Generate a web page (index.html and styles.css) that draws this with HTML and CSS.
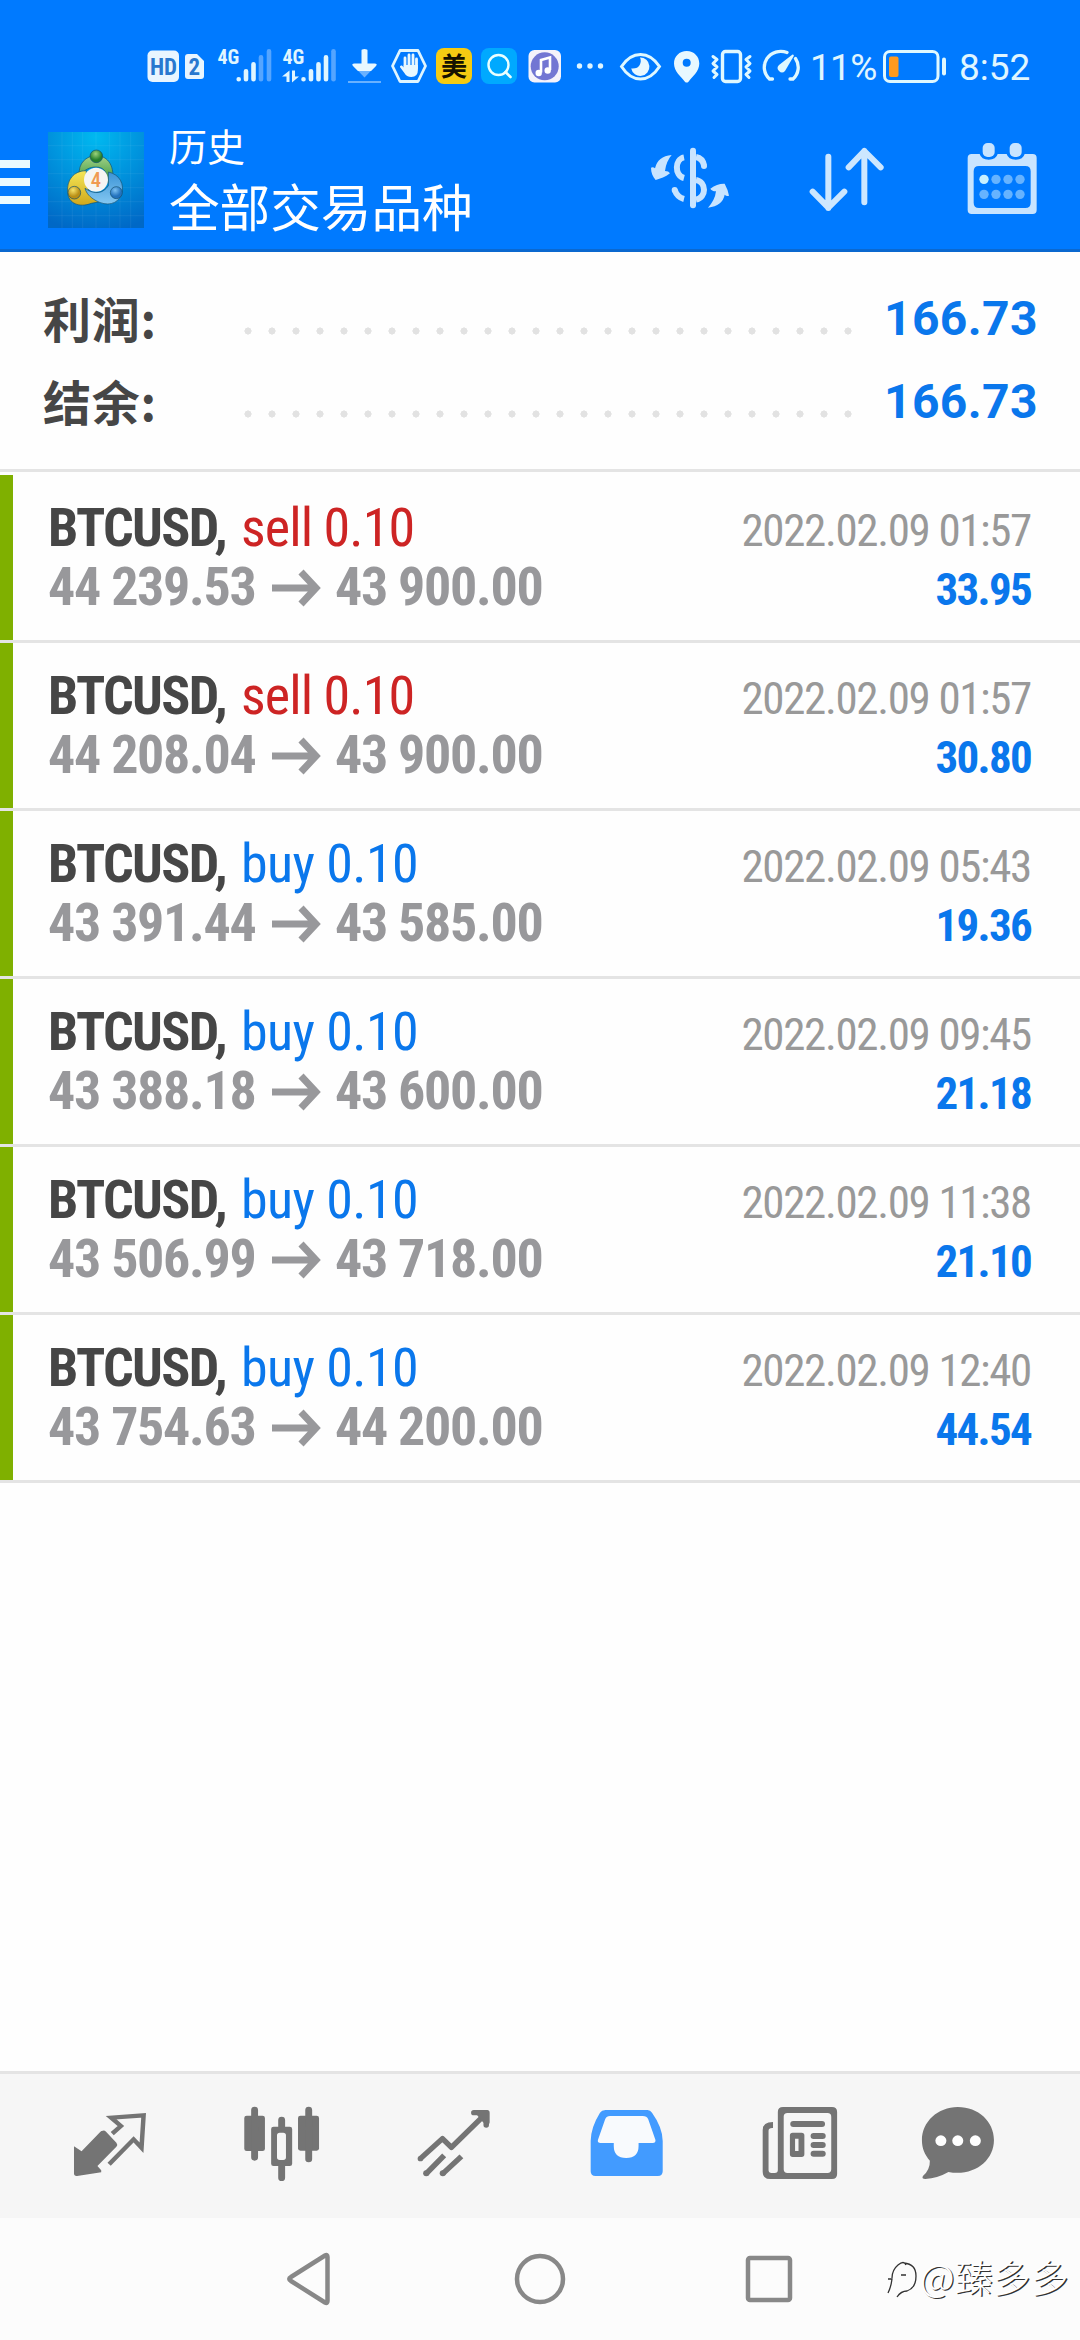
FILE: index.html
```html
<!DOCTYPE html>
<html lang="zh-CN">
<head>
<meta charset="utf-8">
<title>历史</title>
<link rel="stylesheet" href="styles.css">
</head>
<body>
<div class="screen">
  <header class="top">
    <div class="status">
      <svg class="st-hd" width="57" height="50" viewBox="147 41 57 50">
        <rect x="147.500" y="50.500" width="31.500" height="31.500" rx="5" fill="#e8f5ff"/>
        <text x="163.500" y="74.500" class="t-hd" text-anchor="middle">HD</text>
        <path d="M188 54h9l7 7v15q0 3-3 3h-13q-3 0-3-3v-19q0-3 3-3z" fill="#e8f5ff"/>
        <text x="194.300" y="74.500" class="t-sim" text-anchor="middle">2</text>
      </svg>
      <svg class="st-sig" width="54" height="50" viewBox="217 41 54 50">
        <text x="217.500" y="63.500" class="t-net">4G</text>
        <g stroke="#e0f6ff" stroke-width="4.600" stroke-linecap="round">
          <path d="M238.700 79.300v0M246 79.300v-8M253.500 79.300v-15"/>
          <path d="M261 79.300v-22M269 79.300v-28" stroke="#55a5ff"/>
        </g>
      </svg>
      <svg class="st-sig" width="54" height="50" viewBox="282 41 54 50">
        <text x="282.500" y="63.500" class="t-net">4G</text>
        <g stroke="#e0f6ff" stroke-width="4.600" stroke-linecap="round">
          <path d="M303.500 79.300v0M311 79.300v-8M318.500 79.300v-15M326 79.300v-22"/>
          <path d="M333.500 79.300v-28" stroke="#55a5ff"/>
        </g>
        <path d="M289.500 70.500v11.500h-3v-5.500h-4.500zM292 70.500h3v6h4l-7 6z" fill="#e0f6ff"/>
      </svg>
      <svg class="st-down" width="34" height="50" viewBox="348 41 34 50">
        <path d="M353 65.500h23l-11.500 12z" fill="#68b1ff"/>
        <path d="M361.500 50.500q0-1.500 3-1.500t3 1.500v13h7q3.500 0 1.500 2.500l-5 5h-13l-5-5q-2-2.500 1.500-2.500h7z" fill="#e8f8ff"/>
        <path d="M348 82h33" stroke="#68b1ff" stroke-width="2"/>
      </svg>
      <svg class="st-hand" width="36" height="50" viewBox="391 41 36 50">
        <path d="M400 50.500h18l7.500 15.500-7.500 15.500h-18l-7.500-15.500z" fill="none" stroke="#dff5ff" stroke-width="2.800" stroke-linejoin="round"/>
        <path d="M405 68v-10M409 67v-12M413 67v-12M416.500 68v-9" stroke="#e8f8ff" stroke-width="2.800" stroke-linecap="round"/>
        <path d="M403.700 65h14.200v5q0 7-6.500 7-5 0-7-4l-4.500-6q0-2 2-1.500l2 2z" fill="#e8f8ff"/>
      </svg>
      <span class="badge-mei">美</span>
      <svg class="st-search" width="36" height="50" viewBox="481 41 36 50">
        <rect x="481" y="48" width="36" height="36" rx="8" fill="#00a9ff"/>
        <circle cx="498.500" cy="65" r="10" fill="none" stroke="#eaffff" stroke-width="2.400"/>
        <path d="M505.500 72l5 5" stroke="#eaffff" stroke-width="2.600" stroke-linecap="round"/>
      </svg>
      <svg class="st-music" width="33" height="50" viewBox="528 41 33 50">
        <rect x="528.500" y="50" width="32.500" height="32.500" rx="6" fill="#f4f2fb"/>
        <circle cx="544.700" cy="66.300" r="14" fill="#7276d3"/>
        <path d="M541 72.500v-12.500l9-2.500v12.500" fill="none" stroke="#fff" stroke-width="2.600"/>
        <circle cx="538.700" cy="73" r="3.200" fill="#fff"/><circle cx="547.700" cy="70.500" r="3.200" fill="#fff"/>
      </svg>
      <svg class="st-more" width="26" height="50" viewBox="577 41 26 50">
        <g fill="#dff5ff"><circle cx="579.500" cy="66" r="2.700"/><circle cx="590" cy="66" r="2.700"/><circle cx="600.500" cy="66" r="2.700"/></g>
      </svg>
      <svg class="st-eye" width="41" height="50" viewBox="620 41 41 50">
        <path d="M621.500 66.500q8-12 19-12t19 12q-8 12.500-19 12.500t-19-12.500z" fill="none" stroke="#dff8ff" stroke-width="3"/>
        <path d="M640 57.500a9.200 9.200 0 1 1-8.800 11q6.500.5 8.500-3.500t.3-7.500z" fill="#e8f8ff"/>
      </svg>
      <svg class="st-pin" width="26" height="50" viewBox="674 41 26 50">
        <path fill-rule="evenodd" d="M686.700 51c7.300 0 12.600 5.500 12.600 12.500 0 8-7 13-10.800 18.200q-1.800 1.800-3.600 0c-3.800-5.200-10.900-10.200-10.900-18.200 0-7 5.400-12.500 12.700-12.500zm0 7.700a4 4 0 1 0 0 8 4 4 0 1 0 0-8z" fill="#e8f8ff"/>
      </svg>
      <svg class="st-vib" width="41" height="50" viewBox="711 41 41 50">
        <g fill="none" stroke="#dff8ff" stroke-linejoin="round" stroke-linecap="round"><rect x="722.500" y="51.500" width="18" height="30" rx="3" stroke-width="3.400"/>
        <path d="M713 56.500l4 3-4 4 4 3.500-4 4 4 3.500-3 3M750 56.500l-4 3 4 4-4 3.500 4 4-4 3.500 3 3" stroke-width="3"/></g>
      </svg>
      <svg class="st-gauge" width="36" height="50" viewBox="763 41 36 50">
        <g fill="none" stroke="#dff8ff" stroke-width="3.300" stroke-linecap="round"><path d="M787 52.500a16.500 16 0 0 0-17.500 26.500h3M795.500 58.500a16.500 16 0 0 1-2.500 20.500h-3"/></g>
        <path d="M792.500 54.500q2 0 1 2l-8.500 14.500q-3 3-6 0t0-6z" fill="#dff8ff"/>
      </svg>
      <span class="st-pct">11%</span>
      <svg class="st-bat" width="64" height="50" viewBox="883 41 64 50">
        <rect x="884.500" y="51.500" width="53.500" height="30" rx="5.500" fill="none" stroke="#dff8ff" stroke-width="3"/>
        <rect x="889" y="56.500" width="9.500" height="20.500" rx="2" fill="#ff9a1f"/>
        <path d="M944 59.500v14" stroke="#dff8ff" stroke-width="4" stroke-linecap="round"/>
      </svg>
      <span class="st-time">8:52</span>
    </div>
    <div class="toolbar">
      <div class="burger"><i></i><i></i><i></i></div>
      <svg class="logo" width="96" height="96" viewBox="24 21 288 288">
        <defs>
          <radialGradient id="bg" cx=".5" cy=".05" r="1"><stop offset="0" stop-color="#00b9f0"/><stop offset=".5" stop-color="#0091dc"/><stop offset="1" stop-color="#0068c6"/></radialGradient>
          <linearGradient id="gr" x2="0" y2="1"><stop offset="0" stop-color="#a3d389"/><stop offset="1" stop-color="#2f8f35"/></linearGradient>
          <linearGradient id="ye" x2="0" y2="1"><stop offset="0" stop-color="#f5e657"/><stop offset="1" stop-color="#cfa81c"/></linearGradient>
          <linearGradient id="bl" x2="0" y2="1"><stop offset="0" stop-color="#3b93d6"/><stop offset="1" stop-color="#84c8f2"/></linearGradient>
          <radialGradient id="g2" cx=".45" cy=".3"><stop offset="0" stop-color="#9bd27c"/><stop offset="1" stop-color="#247f2c"/></radialGradient>
          <radialGradient id="y2" cx=".4" cy=".3"><stop offset="0" stop-color="#f7e46a"/><stop offset="1" stop-color="#b98f16"/></radialGradient>
          <radialGradient id="b2" cx=".4" cy=".3"><stop offset="0" stop-color="#7cc1f2"/><stop offset="1" stop-color="#2372bd"/></radialGradient>
        </defs>
        <path fill="url(#bg)" d="M24 21h288v288H24z"/>
        <path d="M24 62h288M24 104h288M24 146h288M24 188h288M24 230h288M24 272h288M66 21v288M97 21v288M128 21v288M168 21v288M208 21v288M240 21v288M272 21v288" stroke="#fff" stroke-opacity=".09" stroke-width="2"/>
        <g stroke="#14506f" stroke-width="2">
          <path d="M118 150c-4-34 20-58 50-58 37 0 58 32 49 86l-15-5c2-30-10-47-34-47-20 0-32 8-50 24z" fill="url(#gr)"/>
          <path d="M139 137c-38 0-60 28-56 66 2 32 35 46 71 32l32-6c-30-8-50-28-47-92z" fill="url(#ye)"/>
          <path d="M205 141c34 7 50 37 39 68-11 29-44 36-76 18-18-10-29-22-33-37 29 20 54 16 70-8z" fill="url(#bl)"/>
          <circle cx="169" cy="94" r="19" fill="url(#g2)"/><circle cx="103" cy="203" r="19" fill="url(#y2)"/><circle cx="229" cy="203" r="18" fill="url(#b2)"/>
        </g>
        <circle cx="168" cy="164" r="36" fill="#f6f5f3"/>
        <text x="168" y="187" text-anchor="middle" class="logo-num">4</text>
      </svg>
      <div class="titles"><span class="title-sm">历史</span><span class="title-lg">全部交易品种</span></div>
      <div class="actions">
        <svg width="80" height="80" viewBox="90 60 240 240" fill="none" stroke="#c8e4ff">
          <path d="M219 92v164" stroke-width="18" stroke-linecap="round"/>
          <path d="M192 112c-27 5-30 54 0 62M192 237q-20-5-28-27" stroke-width="18"/>
          <circle cx="164" cy="210" r="9" fill="#c8e4ff" stroke="none"/>
          <path d="M228 111q20 4 24 25M228 180c32 6 32 53 0 59" stroke-width="18"/>
          <circle cx="252" cy="138" r="9" fill="#c8e4ff" stroke="none"/>
          <path d="M155 105q-42 4-50 40-6-6-12-2c0 16 6 27 14 37 15-5 29-8 43-20q-4-7-15-7 3-28 20-48zM264 263q44-6 50-39 6 6 13 3-3-18-13-36-22-1-43 15 3 7 17 8-3 26-24 49z" fill="#c8e4ff" stroke="none"/>
        </svg>
        <svg width="80" height="80" viewBox="560 60 240 240" fill="none" stroke="#cde7ff" stroke-width="18" stroke-linecap="round" stroke-linejoin="round">
          <path d="M624 110v154M577 215l47 48 48-48M732 247V93M685 142l47-49 49 49"/>
        </svg>
        <svg width="80" height="80" viewBox="1030 60 240 240">
          <path fill="#c8e4ff" fill-rule="evenodd" d="M1056 102h24q5 17 27 17t27-17h27q5 17 27 17t27-17h24q12 0 12 12v156q0 12-12 12h-183q-12 0-12-12v-156q0-12 12-12zm22 36q-16 0-16 16v94q0 16 16 16h139q16 0 16-16v-94q0-16-16-16z"/>
          <rect x="1089" y="69" width="36" height="42" rx="15" fill="#c8e4ff"/><rect x="1170" y="69" width="36" height="42" rx="15" fill="#c8e4ff"/>
          <g fill="#66b3ff"><circle cx="1093" cy="178" r="14" fill="#c8f0ff"/><circle cx="1129" cy="178" r="14"/><circle cx="1165" cy="178" r="14"/><circle cx="1201" cy="178" r="14"/><circle cx="1093" cy="223" r="14"/><circle cx="1129" cy="223" r="14"/><circle cx="1165" cy="223" r="14"/><circle cx="1201" cy="223" r="14"/></g>
        </svg>
      </div>
    </div>
  </header>

  <section class="summary">
    <div class="sum-row"><span class="sum-label">利润:</span><span class="leader"></span><span class="sum-value">166.73</span></div>
    <div class="sum-row"><span class="sum-label">结余:</span><span class="leader"></span><span class="sum-value">166.73</span></div>
  </section>

  <main class="deals">
    <article class="deal"><div class="line"><span class="symbol">BTCUSD,</span><span class="side sell">sell 0.10</span><time>2022.02.09 01:57</time></div><div class="line"><span class="price">44 239.53</span><svg class="arrow" viewBox="0 0 48 36"><path d="M0 18h43M29 2l15 16-15 16"/></svg><span class="price">43 900.00</span><span class="profit">33.95</span></div></article>
    <article class="deal"><div class="line"><span class="symbol">BTCUSD,</span><span class="side sell">sell 0.10</span><time>2022.02.09 01:57</time></div><div class="line"><span class="price">44 208.04</span><svg class="arrow" viewBox="0 0 48 36"><path d="M0 18h43M29 2l15 16-15 16"/></svg><span class="price">43 900.00</span><span class="profit">30.80</span></div></article>
    <article class="deal"><div class="line"><span class="symbol">BTCUSD,</span><span class="side buy">buy 0.10</span><time>2022.02.09 05:43</time></div><div class="line"><span class="price">43 391.44</span><svg class="arrow" viewBox="0 0 48 36"><path d="M0 18h43M29 2l15 16-15 16"/></svg><span class="price">43 585.00</span><span class="profit">19.36</span></div></article>
    <article class="deal"><div class="line"><span class="symbol">BTCUSD,</span><span class="side buy">buy 0.10</span><time>2022.02.09 09:45</time></div><div class="line"><span class="price">43 388.18</span><svg class="arrow" viewBox="0 0 48 36"><path d="M0 18h43M29 2l15 16-15 16"/></svg><span class="price">43 600.00</span><span class="profit">21.18</span></div></article>
    <article class="deal"><div class="line"><span class="symbol">BTCUSD,</span><span class="side buy">buy 0.10</span><time>2022.02.09 11:38</time></div><div class="line"><span class="price">43 506.99</span><svg class="arrow" viewBox="0 0 48 36"><path d="M0 18h43M29 2l15 16-15 16"/></svg><span class="price">43 718.00</span><span class="profit">21.10</span></div></article>
    <article class="deal"><div class="line"><span class="symbol">BTCUSD,</span><span class="side buy">buy 0.10</span><time>2022.02.09 12:40</time></div><div class="line"><span class="price">43 754.63</span><svg class="arrow" viewBox="0 0 48 36"><path d="M0 18h43M29 2l15 16-15 16"/></svg><span class="price">44 200.00</span><span class="profit">44.54</span></div></article>
  </main>

  <nav class="tabs">
    <svg viewBox="186 42 267 432" preserveAspectRatio="none" fill="none" stroke="#747474" stroke-width="13">
      <path d="M299 212q-5 0-8 4l-54 58-22-15v81q0 9 9 8l70-11v-6l-11-13 55-58q5-6 0-12l-30-33q-4-4-9-3z" fill="#747474" stroke="none"/>
      <path d="M326 221l25-23-28-25 94-7-6 97-23-25-71 75"/>
    </svg>
    <svg viewBox="685 42 267 432" preserveAspectRatio="none" fill="#747474">
      <rect x="709" y="167" width="60" height="106" rx="7"/><rect x="865" y="167" width="61" height="105" rx="7"/>
      <path fill-rule="evenodd" d="M794 200h47q7 0 7 7v104q0 7-7 7h-47q-7 0-7-7V207q0-7 7-7zm18 18q-8 0-8 8v66q0 8 8 8h10q8 0 8-8v-66q0-8-8-8z"/>
      <path d="M739 150v142M896 150v147M817.500 180v22M817.500 315v38" stroke="#747474" stroke-width="20" stroke-linecap="round"/>
    </svg>
    <svg viewBox="1185 42 267 432" preserveAspectRatio="none" fill="none" stroke="#747474" stroke-width="16" stroke-linejoin="round">
      <path d="M1221 296l64-60 26 26 97-98M1238 341l52-55M1286 341l54-52"/><path d="M1376 158h36v37" stroke-width="16" stroke-linecap="round"/>
      <path d="M1390 158h24v28l-12-12z" fill="#747474"/>
      <g fill="#747474" stroke="none"><circle cx="1221" cy="296" r="8"/><circle cx="1238" cy="340" r="9"/><circle cx="1286" cy="340" r="9"/></g>
    </svg>
    <svg viewBox="116 42 267 432" preserveAspectRatio="none">
      <path d="M190 150h122q8 0 13 8 31 45 31 85v91q0 14-14 14H161q-14 0-14-14v-91q0-40 27-85 5-8 16-8z" fill="#429bff"/>
      <path d="M203 168h95q12 0 16 10l21 62q1 9-8 9h-41v9q0 36-36 36t-36-36v-9h-38q-10 0-8-9l21-62q4-10 14-10z" fill="#f8fafd"/>
    </svg>
    <svg viewBox="616 42 267 432" preserveAspectRatio="none" fill="#747474">
      <path fill-rule="evenodd" d="M706 141h142q15 0 15 15v186q0 15-15 15H669q-22 0-22-22V210q0-24 30-24v18q-13-1-13 8v118q0 9 9 9h9q9 0 9-9V156q0-15 15-15zm13 18q-11 0-11 11v158q0 11 11 11h116q11 0 11-11V170q0-11-11-11z"/>
      <path d="M736 192h83M795 228h26M795 255h26M795 281h26" stroke="#747474" stroke-width="18" stroke-linecap="round"/>
      <path fill-rule="evenodd" d="M734 218h26q8 0 8 8v57q0 8-8 8h-26q-8 0-8-8v-57q0-8 8-8zm7 18v37h10v-37z"/>
    </svg>
    <svg viewBox="1115 42 267 432" preserveAspectRatio="none">
      <path d="M1213 141c60 0 105 44 105 99 0 64-60 110-132 96q-32 19-67 21-12 0-7-9 21-20 20-46c-15-18-23-36-23-62 0-54 46-99 104-99z" fill="#747474"/>
      <g fill="#fff"><circle cx="1164" cy="242" r="16"/><circle cx="1213" cy="242" r="16"/><circle cx="1264" cy="242" r="16"/></g>
    </svg>
  </nav>

  <footer class="sysnav">
    <svg width="50" height="60" viewBox="284 2249 50 60"><path d="M327.500 2257v44q0 3-2.500 1.500l-34-21.500q-3.500-2 0-4l34-21.500q2.500-1.500 2.500 1.500z"/></svg>
    <svg width="60" height="60" viewBox="510 2249 60 60"><circle cx="540" cy="2279" r="23"/></svg>
    <svg width="60" height="60" viewBox="739 2249 60 60"><rect x="748" y="2258" width="42" height="42" rx="2"/></svg>
    <div class="watermark">
      <svg width="34" height="44" viewBox="885 2258 34 44"><path class="wm-dark" d="M888 2297q3-6 4-14h-4M892 2282q0-8 6-13t8 0M901 2279h5M904 2267q12 1 12 13t-9 15q-6 0-10 6"/></svg>
      <span>@臻多多</span>
    </div>
  </footer>
</div>
</body>
</html>
```
FILE: styles.css
```css
* { box-sizing: border-box; }
body { margin: 0; background: #fefefe; font-family: Roboto, "Noto Sans CJK SC", sans-serif; }
svg { display: block; flex: none; overflow: visible; }
.screen { width: 1080px; height: 2340px; display: flex; flex-direction: column; overflow: hidden; background: #fefefe; }

.top { height: 252px; flex: none; background: #007aff; border-bottom: 3px solid #0b68cf; }
.status { height: 108px; padding: 41px 0 0 147px; display: flex; align-items: flex-start; }
.st-sig { margin-left: 13px; }
.st-sig + .st-sig { margin-left: 11px; }
.st-down { margin-left: 12px; }
.st-hand { margin-left: 9px; }
.badge-mei { width: 36px; height: 36px; margin: 7px 9px 0; border-radius: 8px; background: #f5cb12; color: #161200; font: 700 26px/34px "Noto Sans CJK SC", sans-serif; text-align: center; }
.st-music { margin-left: 11px; }
.st-more { margin-left: 16px; }
.st-eye { margin-left: 17px; }
.st-pin { margin-left: 13px; }
.st-vib { margin-left: 11px; }
.st-gauge { margin-left: 11px; }
.st-pct, .st-time { font-size: 37px; line-height: 50px; color: #e0f6ff; white-space: nowrap; padding-top: 2px; }
.st-pct { width: 73px; margin-left: 11px; letter-spacing: -.7px; }
.st-time { margin-left: 12px; }
.t-hd { font: 700 23px "Roboto Condensed"; fill: #2878cf; }
.t-sim { font: 700 23px "Roboto Condensed"; fill: #2878cf; }
.t-net { font: 700 20px "Roboto Condensed"; fill: #e0f6ff; }
.logo-num { font: 500 62px "Roboto Condensed"; fill: #f09a52; }

.toolbar { height: 144px; display: flex; align-items: center; }
.burger { width: 30px; margin-right: 18px; display: grid; gap: 10px; padding-top: 4px; }
.burger i { height: 8px; background: #eafaff; }
.titles { margin-left: 25px; display: flex; flex-direction: column; color: #fff; font-family: "Noto Sans CJK SC", sans-serif; }
.title-sm { font-size: 38px; line-height: 54px; margin-top: -5px; }
.title-lg { font-size: 50.600px; line-height: 64px; margin-top: 1px; }
.actions { display: flex; margin-left: auto; padding-right: 37px; gap: 76.500px; }

.summary { height: 220px; padding: 25px 42px 0 43px; border-bottom: 3px solid #e4e4e4; flex: none; }
.sum-row { height: 83px; display: flex; align-items: center; font-weight: 700; }
.sum-label { width: 193px; margin-top: -3px; color: #464646; font: 700 48px/83px "Noto Sans CJK SC", sans-serif; letter-spacing: .7px; }
.leader { width: 624px; height: 8px; margin-top: 24px; background: radial-gradient(circle 3.800px at 12px 4px, #e2e2e2 88%, transparent) repeat-x 0 0 / 24px 8px; }
.sum-value { margin-left: auto; color: #0a77ec; font-size: 48px; letter-spacing: .4px; }

.deals { padding-top: 3px; flex: 1; }
.deal { height: 168px; padding: 23px 49px 0 48px; border-bottom: 3px solid #e4e4e4; font-family: "Roboto Condensed", Roboto, sans-serif; background: linear-gradient(#7fb000, #7fb000) 0 0 / 13px 100% no-repeat padding-box; }
.line { display: flex; align-items: baseline; height: 59px; line-height: 59px; font-size: 54px; white-space: nowrap; }
.symbol { width: 193px; font-weight: 700; color: #464646; letter-spacing: -1.600px; }
.sell { color: #cd2424; letter-spacing: -.900px; }
.buy { color: #0a77ec; letter-spacing: -.600px; }
.price { font-weight: 700; color: #98989b; letter-spacing: -1.300px; }
.arrow { width: 48px; height: 36px; margin: 0 14.500px 0 17px; align-self: flex-start; position: relative; top: 13px; fill: none; stroke: #98989b; stroke-width: 7px; }
time { margin-left: auto; font-size: 45px; color: #999; letter-spacing: -1.350px; }
.profit { margin-left: auto; font-size: 45px; font-weight: 700; color: #0a77ec; letter-spacing: -1.700px; }

.tabs { height: 147px; flex: none; border-top: 3px solid #e4e4e4; background: #f6f6f6; padding-left: 64px; display: flex; gap: 80px; }
.tabs svg { width: 92px; height: 144px; }

.sysnav { height: 122px; flex: none; background: #fcfcfc; display: flex; align-items: center; padding-left: 284px; }
.sysnav > svg { fill: none; stroke: #888; stroke-width: 4.500px; }
.sysnav > svg + svg { margin-left: 176px; }
.sysnav > svg + svg + svg { margin-left: 169px; }
.watermark { margin: -6px 0 0 86px; display: flex; align-items: center; color: #fff; font: 300 38px/50px "Noto Sans CJK SC", sans-serif; text-shadow: 1.300px 1.300px .5px #333; white-space: nowrap; }
.watermark span { margin-left: 1px; }
.wm-dark { fill: none; stroke: #333; stroke-width: 1.300px; }
```
